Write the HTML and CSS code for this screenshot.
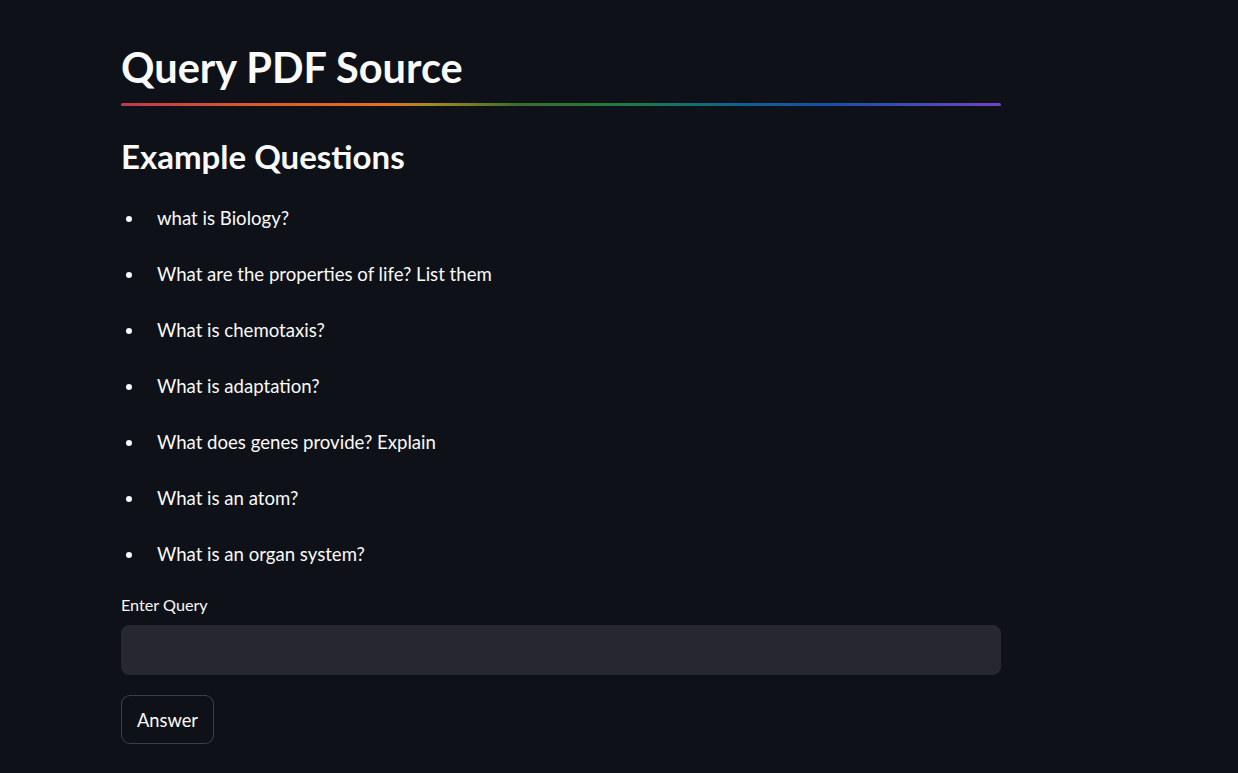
FILE: index.html
```html
<!DOCTYPE html>
<html lang="en">
<head>
<meta charset="utf-8">
<title>Query PDF Source</title>
<link rel="stylesheet" href="styles.css">
</head>
<body>
<main class="app">
  <div class="block">
    <h1 class="title">Query PDF Source</h1>
    <hr class="rainbow">
    <h2 class="subtitle">Example Questions</h2>
    <ul class="questions">
      <li><span class="dot"></span><span>what is Biology?</span></li>
      <li><span class="dot"></span><span>What are the properties of life? List them</span></li>
      <li><span class="dot"></span><span>What is chemotaxis?</span></li>
      <li><span class="dot"></span><span>What is adaptation?</span></li>
      <li><span class="dot"></span><span>What does genes provide? Explain</span></li>
      <li><span class="dot"></span><span>What is an atom?</span></li>
      <li><span class="dot"></span><span>What is an organ system?</span></li>
    </ul>
    <label class="label" for="q">Enter Query</label>
    <input class="query" id="q" type="text">
    <button class="answer" type="button">Answer</button>
  </div>
</main>
</body>
</html>
```
FILE: styles.css
```css
html, body {
  margin: 0;
  padding: 0;
  background: #0e1117;
  color: #fafafa;
  font-family: "Lato", "Liberation Sans", sans-serif;
  height: 100%;
}
.app {
  padding: 0 0 0 121px;
}
.block {
  width: 880px;
  display: flex;
  flex-direction: column;
  align-items: flex-start;
}
.title {
  margin: 43px 0 0 0;
  font-size: 41.5px;
  line-height: 1.2;
  font-weight: 700;
}
.rainbow {
  width: 880px;
  height: 3px;
  border: 0;
  margin: 10px 0 0 0;
  border-radius: 2px;
  background: linear-gradient(to right, #bd3a4c 0%, #db5a2c 15%, #e3721c 30%, #a88a22 35%, #3c6e2c 45%, #1f7c42 57%, #116290 70%, #1650a4 80%, #3a4cb4 88%, #7043c4 100%);
}
.subtitle {
  margin: 31.5px 0 0 0;
  font-size: 33px;
  line-height: 1.2;
  font-weight: 700;
}
.questions {
  list-style: none;
  margin: 13.5px 0 0 0;
  padding: 0;
}
.questions li {
  display: flex;
  align-items: center;
  height: 56px;
  font-size: 18.6px;
  line-height: 56px;
}
.dot {
  width: 6px;
  height: 6px;
  border-radius: 50%;
  background: #fafafa;
  margin: 2px 0 0 5px;
  flex: none;
}
.questions li span:last-child {
  margin-left: 25px;
}
.label {
  margin-top: 13px;
  font-size: 16.2px;
  line-height: 1.2;
}
.query {
  margin-top: 10px;
  width: 880px;
  height: 50px;
  box-sizing: border-box;
  border: 1px solid #262730;
  border-radius: 8px;
  background: #262730;
  color: #fafafa;
  font-family: inherit;
  font-size: 18px;
  padding: 0 16px;
  outline: none;
}
.answer {
  margin-top: 20px;
  width: 93px;
  height: 49px;
  box-sizing: border-box;
  border: 1px solid rgba(250, 250, 250, 0.2);
  border-radius: 9px;
  background: #0e1117;
  color: #fafafa;
  font-family: inherit;
  font-size: 18.3px;
  line-height: 1.2;
  padding: 4px 0 0 0;
}
```
